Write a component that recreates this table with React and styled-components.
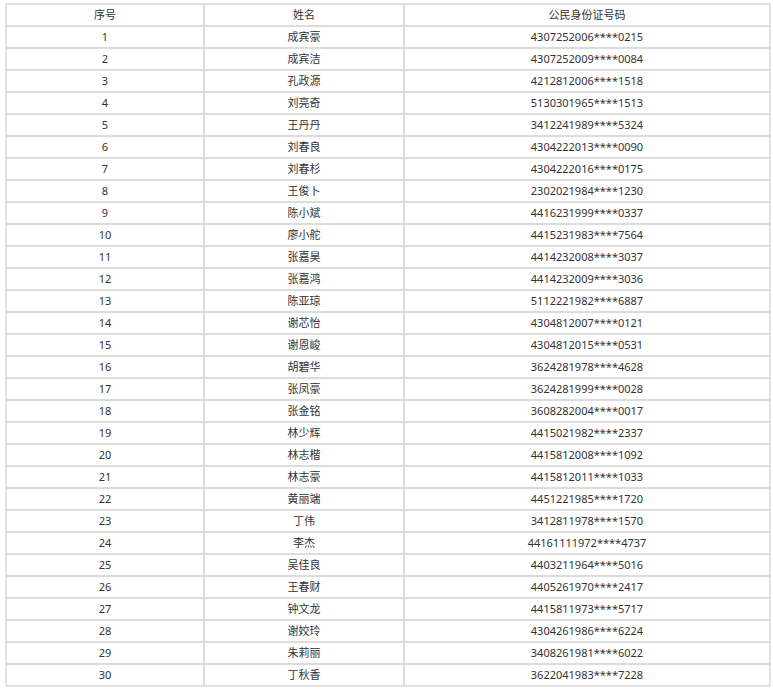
import React from "react";
import styled, { createGlobalStyle } from "styled-components";

const Global = createGlobalStyle`
  html, body { margin: 0; padding: 0; background: #fff; }
  body { font-family: "Noto Sans", "Noto Sans CJK SC", sans-serif; }
`;

const Wrap = styled.div`
  padding: 3px 2px 0 5px;
`;

const Table = styled.table`
  width: 766px;
  table-layout: fixed;
  border-collapse: separate;
  border-spacing: 0;
  border: 1px solid #e6e6e6;
  padding: 0;
  font-size: 11px;
  color: #333;
`;

const Cell = styled.td`
  border: 1px solid #dcdcdc;
  height: 20px;
  padding: 0;
  text-align: center;
  vertical-align: middle;
  line-height: 20px;
  white-space: nowrap;
`;

const Head = styled(Cell).attrs({ as: "th" })`
  font-weight: normal;
`;

const rows = [
  ["成宾豪", "4307252006****0215"],
  ["成宾洁", "4307252009****0084"],
  ["孔政源", "4212812006****1518"],
  ["刘亮奇", "5130301965****1513"],
  ["王丹丹", "3412241989****5324"],
  ["刘春良", "4304222013****0090"],
  ["刘春杉", "4304222016****0175"],
  ["王俊卜", "2302021984****1230"],
  ["陈小斌", "4416231999****0337"],
  ["廖小舵", "4415231983****7564"],
  ["张嘉昊", "4414232008****3037"],
  ["张嘉鸿", "4414232009****3036"],
  ["陈亚琼", "5112221982****6887"],
  ["谢芯怡", "4304812007****0121"],
  ["谢恩峻", "4304812015****0531"],
  ["胡碧华", "3624281978****4628"],
  ["张凤豪", "3624281999****0028"],
  ["张金铭", "3608282004****0017"],
  ["林少辉", "4415021982****2337"],
  ["林志楷", "4415812008****1092"],
  ["林志豪", "4415812011****1033"],
  ["黄丽端", "4451221985****1720"],
  ["丁伟", "3412811978****1570"],
  ["李杰", "44161111972****4737"],
  ["吴佳良", "4403211964****5016"],
  ["王春财", "4405261970****2417"],
  ["钟文龙", "4415811973****5717"],
  ["谢姣玲", "4304261986****6224"],
  ["朱莉丽", "3408261981****6022"],
  ["丁秋香", "3622041983****7228"],
];

export default function App() {
  return (
    <Wrap>
      <Global />
      <Table>
        <colgroup>
          <col style={{ width: 198 }} />
          <col style={{ width: 200 }} />
          <col />
        </colgroup>
        <thead>
          <tr>
            <Head>序号</Head>
            <Head>姓名</Head>
            <Head>公民身份证号码</Head>
          </tr>
        </thead>
        <tbody>
          {rows.map(([name, id], i) => (
            <tr key={i}>
              <Cell>{i + 1}</Cell>
              <Cell>{name}</Cell>
              <Cell>{id}</Cell>
            </tr>
          ))}
        </tbody>
      </Table>
    </Wrap>
  );
}
